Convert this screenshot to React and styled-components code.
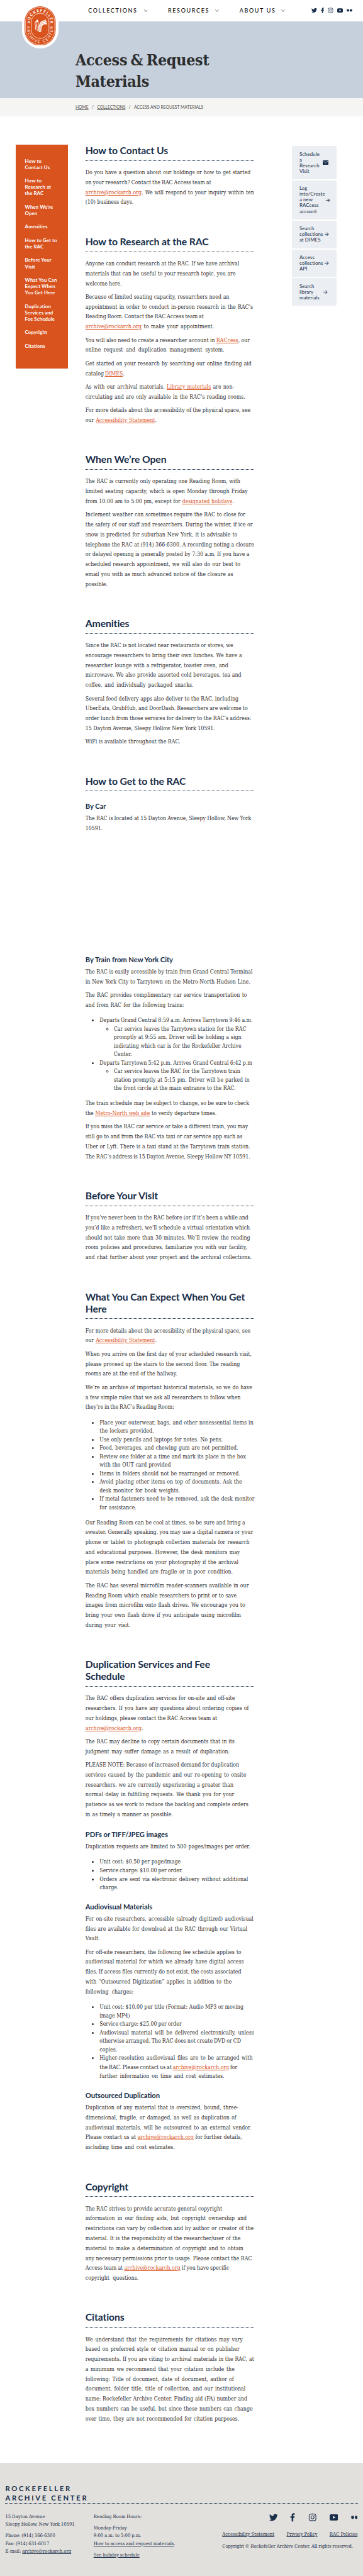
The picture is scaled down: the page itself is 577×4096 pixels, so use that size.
import React from 'react';
import styled, { createGlobalStyle, css } from 'styled-components';
import { FaTwitter, FaFacebookF, FaInstagram } from 'react-icons/fa';

/* One rem stands for 16 design pixels. */
const r = (n) => `${n / 16}rem`;

const color = {
  navy: '#192e49',
  orange: '#d9531e',
  ink: '#2e2e2e',
  sky: '#c5d0dc',
  mist: '#f5f5f3',
  card: '#ebeef2',
  stone: '#e2e0dd',
};

const sans = `Lato, "Open Sans", sans-serif`;
const serif = `"DejaVu Serif Condensed", "DejaVu Serif", serif`;

const GlobalStyle = createGlobalStyle`
  html { font-size: 9.0125px; }
  body { margin: 0; background: #fff; color: ${color.ink}; font-family: ${serif}; }
  * { box-sizing: border-box; }
  h1, h2, h3, p, ul { margin: 0; padding: 0; }
`;

const Page = styled.div`
  width: 100%;
  overflow: hidden;
`;

/* ---------- header ---------- */

const Header = styled.header`
  position: relative;
  height: ${r(60)};
  display: flex;
  align-items: center;
  padding-left: ${r(249)};
`;

const MenuItem = styled.a`
  display: flex;
  align-items: center;
  justify-content: space-between;
  flex: none;
  width: ${(p) => r(p.$width)};
  margin-right: ${(p) => r(p.$after)};
  padding-bottom: ${r(2)};
  font: 500 ${r(16)} / ${r(20)} ${sans};
  letter-spacing: ${r(2.9)};
  color: #111;
  white-space: nowrap;

  svg { width: ${r(10)}; height: ${r(7)}; margin-top: ${r(4)}; }
`;

const Chevron = () => (
  <svg viewBox="0 0 10 7" fill="none" stroke="#444" strokeWidth="1.5">
    <path d="M.7 .7 5 6 9.3 .7" />
  </svg>
);

const Social = styled.div`
  display: flex;
  align-items: center;
  justify-content: space-between;
  flex: none;
  width: ${(p) => r(p.$width)};
  height: ${(p) => r(p.$size)};
  color: ${color.navy};

  svg { display: block; flex: none; height: ${(p) => r(p.$size)}; width: ${(p) => r(p.$size)}; }
  svg.narrow { width: ${(p) => r(p.$size * 0.6)}; }
  svg.dots { width: ${(p) => r(p.$dots)}; }
`;

const YouTube = () => (
  <svg viewBox="0 0 24 24">
    <rect x="0" y="3" width="24" height="18" rx="4.5" fill="currentColor" />
    <path d="M9.500 8v8l7-4z" fill="#fff" />
  </svg>
);

const Flickr = () => (
  <svg className="dots" viewBox="0 0 16 8" fill="currentColor">
    <circle cx="3.7" cy="4" r="3.6" />
    <circle cx="12.3" cy="4" r="3.6" />
  </svg>
);

const SocialLinks = ({ width, size, dots }) => (
  <Social $width={width} $size={size} $dots={dots}>
    <FaTwitter />
    <FaFacebookF className="narrow" />
    <FaInstagram />
    <YouTube />
    <Flickr />
  </Social>
);

const Badge = styled.div`
  position: absolute;
  z-index: 1;
  top: 0;
  left: ${r(63)};
  width: ${r(102)};
  height: ${r(137)};
  padding-top: ${r(17)};
  background: #fff;
  border-radius: 0 0 ${r(51)} ${r(51)};

  svg { display: block; margin: 0 auto; width: ${r(88)}; height: ${r(111)}; }
`;

const Seal = () => (
  <svg viewBox="0 0 88 111">
    <rect width="88" height="111" rx="44" fill={color.orange} />
    <rect x="2.6" y="2.6" width="82.8" height="105.8" rx="41.4" fill="none" stroke="#fff" strokeWidth="1.1" />
    <rect x="19" y="19.5" width="50" height="71.5" rx="25" fill="none" stroke="#fff" strokeWidth="1.3" />
    <defs>
      <path id="arc-top" d="M15.5 49 V44 A28.5 28.5 0 0 1 72.5 44 V49" />
      <path id="arc-bottom" d="M7.6 54.5 V67 A36.4 36.4 0 0 0 80.4 67 V54.5" />
    </defs>
    <g fill="#fff" fontFamily="Lato, sans-serif" fontSize="11">
      <text fontWeight="900" fontSize="11"><textPath href="#arc-top" textLength="99" lengthAdjust="spacing">ROCKEFELLER</textPath></text>
      <text fontSize="11"><textPath href="#arc-bottom" startOffset="1" textLength="136" lengthAdjust="spacing">ARCHIVE CENTER</textPath></text>
    </g>
    <g fill="#fff">
      <path d="M28.5 46.5 36 37c2.500 3.500 3.800 8 4 14L43 70l-1.300 3-1.800-2.500-.700-19.500c-.600-3-1.600-5-3.200-6.500z" />
      <path d="M28.500 46.500l2.600 1 1 19.700-1.300-.8-1-14.500zM33 47l2.200 2 1.500 21-1.700-1zM37 49.500l1 2.500 1 20-1.200-1z" />
      <path d="M40.500 72c-1.500-14 .5-24.500 7-29.500 4-2.500 8-2 11.500-5l2-.2-2.300 4.700 4.800-.3-2.700 4 3 .3-2 6c-5-3-9-1-11.800 3-2.500 4-2.800 9-2.800 16l-3.200 1.800z" />
    </g>
    <g fill="none" stroke={color.orange} strokeWidth=".9">
      <path d="M42.500 71c-.8-13 1-21.500 6.500-25.500 4-2.500 8-1.500 12-4.300M44.500 71c-.4-12 1.200-18.500 6-22 4-2.300 8-1.200 12-3.200" />
      <path d="M31.500 47.500 34 68M36 48l2.500 22M53 43l5-5" />
    </g>
  </svg>
);

/* ---------- banner ---------- */

const Hero = styled.div`
  height: ${r(217)};
  padding: ${r(80)} 0 0 ${r(213)};
  background: ${color.sky};
`;

const Title = styled.h1`
  font: 700 ${r(44)} / ${r(60)} ${serif};
  letter-spacing: ${r(-0.42)};
  word-spacing: ${r(-4)};
  white-space: nowrap;
`;

const Crumbs = styled.nav`
  display: flex;
  align-items: center;
  height: ${r(52)};
  padding-left: ${r(213)};
  background: ${color.mist};
  font: 400 ${r(12)} / ${r(16)} ${sans};
  color: #555;
  white-space: nowrap;

  a { text-decoration: underline; }
  i { width: ${r(24)}; text-align: center; font-style: normal; }
`;

/* ---------- body columns ---------- */

const Columns = styled.div`
  display: flex;
  align-items: flex-start;
  height: ${r(6624)};
`;

const SideNav = styled.nav`
  flex: none;
  width: ${r(146)};
  height: ${r(632)};
  margin: ${r(80)} 0 0 ${r(45)};
  padding: ${r(36)} 0 0 ${r(25.3)};
  background: ${color.orange};
  color: #fff;
  font: 700 ${r(14)} / ${r(18)} ${sans};
  letter-spacing: ${r(0.15)};
  white-space: pre-line;

  a { display: block; margin-bottom: ${r(20)}; }
`;

const Article = styled.main`
  flex: none;
  width: ${r(477)};
  margin: ${r(79.4)} 0 0 ${r(50)};
`;

const Actions = styled.aside`
  flex: none;
  width: ${r(127)};
  margin: ${r(83.3)} 0 0 ${r(105)};
`;

const Action = styled.a`
  display: flex;
  align-items: center;
  justify-content: space-between;
  margin-bottom: ${r(3)};
  padding: ${r(15)} ${(p) => r(p.$right)} ${r(15.3)} ${r(22)};
  border-radius: ${r(3)};
  background: ${color.card};
  color: ${color.navy};
  font: 400 ${r(14)} / ${r(16)} ${sans};
  letter-spacing: ${r(0.13)};
  white-space: pre;

  svg { display: block; flex: none; width: ${(p) => r(p.$icon)}; }
`;

const Envelope = () => (
  <svg viewBox="0 0 16 13">
    <rect width="16" height="13" rx="1.5" fill={color.navy} />
    <path d="M1.800 2.300 8 6.800l6.200-4.500" fill="none" stroke={color.card} strokeWidth="1.300" />
  </svg>
);

const Arrow = () => (
  <svg viewBox="0 0 12 12" fill="none" stroke={color.navy} strokeWidth="1.700">
    <path d="M0 6h10.500M5.800 1l5 5-5 5" />
  </svg>
);

/* ---------- article text ---------- */

const H2 = styled.h2`
  margin-bottom: ${r(20.3)};
  padding-bottom: ${r(10.3)};
  border-bottom: 1px dotted ${color.navy};
  font: 700 ${r(28)} / ${r(33.6)} ${sans};
  letter-spacing: ${r(-0.2)};
  color: ${color.navy};
  white-space: pre-line;
`;

const H3 = styled.h3`
  margin: ${(p) => r(p.$top)} 0 ${r(10)};
  font: 700 ${r(20)} / ${r(24)} ${sans};
  letter-spacing: ${r(-0.1)};
  color: ${color.navy};
`;

const Section = styled.section`
  margin-bottom: ${r(79.2)};
`;

const textSize = css`
  font-size: ${r(15.6)};
  word-spacing: ${r(-1.3)};
`;

const Paragraph = styled.p`
  ${textSize}
  line-height: ${r(28)};
  & + & { margin-top: ${r(10)}; }
`;

/* A set line of type, its words spread to the line's measure. */
const Line = styled.span`
  display: block;
  width: ${(p) => r(p.$measure)};
  text-align: justify;
  text-align-last: justify;
  white-space: nowrap;
`;

const Link = styled.a`
  color: ${color.orange};
  text-decoration: underline;
  line-height: ${r(28)};
`;

const List = styled.ul`
  ${textSize}
  margin: ${(p) => (p.$nested ? 0 : r(16.8))} 0;
  padding-left: ${r(40)};
  list-style: ${(p) => (p.$nested ? 'circle' : 'disc')};
  line-height: ${r(24)};
`;

const Item = styled.li``;

const MapSpace = styled.div`
  height: ${r(312.5)};
`;

/* Square brackets in a line mark a link. */
const Lines = ({ of }) =>
  of.map(([measure, text], i) => (
    <Line key={i} $measure={measure}>
      {text.split(/[[\]]/).map((part, k) => (k % 2 ? <Link key={k}>{part}</Link> : part))}
    </Line>
  ));

const P = ({ of }) => <Paragraph><Lines of={of} /></Paragraph>;
const Li = ({ of, children }) => <Item><Lines of={of} />{children}</Item>;

/* ---------- footer ---------- */

const Footer = styled.footer`
  height: ${r(322)};
  padding: ${r(60)} ${r(15)} 0;
  background: ${color.stone};
  color: ${color.navy};
`;

const Wordmark = styled.div`
  border-bottom: 1px dotted ${color.navy};
  font: 700 ${r(20)} / ${r(26)} ${sans};
  letter-spacing: ${r(4.75)};
`;

const FooterRow = styled.div`
  display: flex;
  padding-top: ${r(27.5)};
  font-size: ${r(13.6)};
  word-spacing: ${r(-0.5)};
  line-height: ${r(22)};
  white-space: nowrap;

  a { text-decoration: underline; }
`;

const FooterColumn = styled.div`
  width: ${(p) => r(p.$width)};
  p + p { margin-top: ${r(10)}; }
`;

const Legal = styled.div`
  display: flex;
  flex-direction: column;
  align-items: flex-end;
  width: ${r(382)};
`;

const Policies = styled.div`
  display: flex;
  justify-content: space-between;
  width: 100%;
  margin: ${r(26)} 0 ${r(12)};
  font-size: ${r(13.8)};
`;

const Rights = styled.div`
  width: 100%;
  font-size: ${r(13.5)};
`;

const navItems = [
  'How to\nContact Us', 'How to\nResearch at\nthe RAC', 'When We’re\nOpen', 'Amenities',
  'How to Get to\nthe RAC', 'Before Your\nVisit', 'What You Can\nExpect When\nYou Get Here',
  'Duplication\nServices and\nFee Schedule', 'Copyright', 'Citations',
];

export default function App() {
  return (
    <Page>
      <GlobalStyle />
      <Header>
        <Badge><Seal /></Badge>
        <MenuItem $width={167} $after={58}>COLLECTIONS<Chevron /></MenuItem>
        <MenuItem $width={144} $after={58}>RESOURCES<Chevron /></MenuItem>
        <MenuItem $width={128} $after={74}>ABOUT US<Chevron /></MenuItem>
        <SocialLinks width={117} size={16} dots={16} />
      </Header>
      <Hero>
        <Title>Access &amp; Request<br />Materials</Title>
      </Hero>
      <Crumbs>
        <a>HOME</a><i>/</i><a>COLLECTIONS</a><i>/</i><span>ACCESS AND REQUEST MATERIALS</span>
      </Crumbs>

      <Columns>
        <SideNav>
          {navItems.map((item) => <a key={item}>{item}</a>)}
        </SideNav>

        <Article>
          <Section>
            <H2>How to Contact Us</H2>
            <P of={[
              [466, 'Do you have a question about our holdings or how to get started'],
              [355, 'on your research? Contact the RAC Access team at'],
              [476, '[archive@rockarch.org]. We will respond to your inquiry within ten'],
              [136, '(10) business days.'],
            ]} />
          </Section>

          <Section>
            <H2>How to Research at the RAC</H2>
            <P of={[
              [434, 'Anyone can conduct research at the RAC. If we have archival'],
              [424, 'materials that can be useful to your research topic, you are'],
              [103, 'welcome here.'],
            ]} />
            <P of={[
              [406, 'Because of limited seating capacity, researchers need an'],
              [473, 'appointment in order to conduct in-person research in the RAC’s'],
              [334, 'Reading Room. Contact the RAC Access team at'],
              [363, '[archive@rockarch.org] to make your appointment.'],
            ]} />
            <P of={[
              [464, 'You will also need to create a researcher account in [RACcess], our'],
              [392, 'online request and duplication management system.'],
            ]} />
            <P of={[
              [469, 'Get started on your research by searching our online finding aid'],
              [107.5, 'catalog [DIMES].'],
            ]} />
            <P of={[
              [420, 'As with our archival materials, [Library materials] are non-'],
              [451, 'circulating and are only available in the RAC’s reading rooms.'],
            ]} />
            <P of={[
              [466, 'For more details about the accessibility of the physical space, see'],
              [201, 'our [Accessibility Statement].'],
            ]} />
          </Section>

          <Section>
            <H2>When We’re Open</H2>
            <P of={[
              [437, 'The RAC is currently only operating one Reading Room, with'],
              [458, 'limited seating capacity, which is open Monday through Friday'],
              [419, 'from 10:00 am to 5:00 pm, except for [designated holidays].'],
            ]} />
            <P of={[
              [451, 'Inclement weather can sometimes require the RAC to close for'],
              [472, 'the safety of our staff and researchers. During the winter, if ice or'],
              [429, 'snow is predicted for suburban New York, it is advisable to'],
              [476, 'telephone the RAC at (914) 366-6300. A recording noting a closure'],
              [463, 'or delayed opening is generally posted by 7:30 a.m. If you have a'],
              [437, 'scheduled research appointment, we will also do our best to'],
              [417, 'email you with as much advanced notice of the closure as'],
              [64, 'possible.'],
            ]} />
          </Section>

          <Section>
            <H2>Amenities</H2>
            <P of={[
              [417, 'Since the RAC is not located near restaurants or stores, we'],
              [442, 'encourage researchers to bring their own lunches. We have a'],
              [403, 'researcher lounge with a refrigerator, toaster oven, and'],
              [440, 'microwave. We also provide assorted cold beverages, tea and'],
              [305, 'coffee, and individually packaged snacks.'],
            ]} />
            <P of={[
              [432, 'Several food delivery apps also deliver to the RAC, including'],
              [458, 'UberEats, GrubHub, and DoorDash. Researchers are welcome to'],
              [468, 'order lunch from those services for delivery to the RAC’s address:'],
              [366, '15 Dayton Avenue, Sleepy Hollow New York 10591.'],
            ]} />
            <P of={[[268, 'WiFi is available throughout the RAC.']]} />
          </Section>

          <Section>
            <H2>How to Get to the RAC</H2>
            <H3 $top={30}>By Car</H3>
            <P of={[
              [468, 'The RAC is located at 15 Dayton Avenue, Sleepy Hollow, New York'],
              [48, '10591.'],
            ]} />
            <MapSpace />
            <H3 $top={30}>By Train from New York City</H3>
            <P of={[
              [472, 'The RAC is easily accessible by train from Grand Central Terminal'],
              [465, 'in New York City to Tarrytown on the Metro-North Hudson Line.'],
            ]} />
            <P of={[
              [456, 'The RAC provides complimentary car service transportation to'],
              [278, 'and from RAC for the following trains:'],
            ]} />
            <List>
              <Li of={[[432, 'Departs Grand Central 8:59 a.m. Arrives Tarrytown 9:46 a.m.']]}>
                <List $nested>
                  <Li of={[
                    [374, 'Car service leaves the Tarrytown station for the RAC'],
                    [360, 'promptly at 9:55 am. Driver will be holding a sign'],
                    [360, 'indicating which car is for the Rockefeller Archive'],
                    [51, 'Center.'],
                  ]} />
                </List>
              </Li>
              <Li of={[[430.5, 'Departs Tarrytown 5:42 p.m. Arrives Grand Central 6:42 p.m']]}>
                <List $nested>
                  <Li of={[
                    [357, 'Car service leaves the RAC for the Tarrytown train'],
                    [383, 'station promptly at 5:15 pm. Driver will be parked in'],
                    [344, 'the front circle at the main entrance to the RAC.'],
                  ]} />
                </List>
              </Li>
            </List>
            <P of={[
              [462, 'The train schedule may be subject to change, so be sure to check'],
              [370, 'the [Metro-North web site] to verify departure times.'],
            ]} />
            <P of={[
              [459, 'If you miss the RAC car service or take a different train, you may'],
              [443, 'still go to and from the RAC via taxi or car service app such as'],
              [465, 'Uber or Lyft. There is a taxi stand at the Tarrytown train station.'],
              [465, 'The RAC’s address is 15 Dayton Avenue, Sleepy Hollow NY 10591.'],
            ]} />
          </Section>

          <Section>
            <H2>Before Your Visit</H2>
            <P of={[
              [460, 'If you’ve never been to the RAC before (or if it’s been a while and'],
              [464, 'you’d like a refresher), we’ll schedule a virtual orientation which'],
              [465, 'should not take more than 30 minutes. We’ll review the reading'],
              [456, 'room policies and procedures, familiarize you with our facility,'],
              [469, 'and chat further about your project and the archival collections.'],
            ]} />
          </Section>

          <Section>
            <H2>{'What You Can Expect When You Get\nHere'}</H2>
            <P of={[
              [466, 'For more details about the accessibility of the physical space, see'],
              [201, 'our [Accessibility Statement].'],
            ]} />
            <P of={[
              [469, 'When you arrive on the first day of your scheduled research visit,'],
              [436, 'please proceed up the stairs to the second floor. The reading'],
              [259, 'rooms are at the end of the hallway.'],
            ]} />
            <P of={[
              [471, 'We’re an archive of important historical materials, so we do have'],
              [438, 'a few simple rules that we ask all researchers to follow when'],
              [250, 'they’re in the RAC’s Reading Room:'],
            ]} />
            <List>
              <Li of={[
                [434, 'Place your outerwear, bags, and other nonessential items in'],
                [153, 'the lockers provided.'],
              ]} />
              <Li of={[[348, 'Use only pencils and laptops for notes. No pens.']]} />
              <Li of={[[391, 'Food, beverages, and chewing gum are not permitted.']]} />
              <Li of={[
                [413, 'Review one folder at a time and mark its place in the box'],
                [201, 'with the OUT card provided'],
              ]} />
              <Li of={[[397, 'Items in folders should not be rearranged or removed.']]} />
              <Li of={[
                [402, 'Avoid placing other items on top of documents. Ask the'],
                [227, 'desk monitor for book weights.'],
              ]} />
              <Li of={[
                [437, 'If metal fasteners need to be removed, ask the desk monitor'],
                [104, 'for assistance.'],
              ]} />
            </List>
            <P of={[
              [451, 'Our Reading Room can be cool at times, so be sure and bring a'],
              [473, 'sweater. Generally speaking, you may use a digital camera or your'],
              [463, 'phone or tablet to photograph collection materials for research'],
              [436, 'and educational purposes. However, the desk monitors may'],
              [432, 'place some restrictions on your photography if the archival'],
              [416, 'materials being handled are fragile or in poor condition.'],
            ]} />
            <P of={[
              [461, 'The RAC has several microfilm reader-scanners available in our'],
              [427, 'Reading Room which enable researchers to print or to save'],
              [451, 'images from microfilm onto flash drives. We encourage you to'],
              [439, 'bring your own flash drive if you anticipate using microfilm'],
              [127, 'during your visit.'],
            ]} />
          </Section>

          <Section>
            <H2>{'Duplication Services and Fee\nSchedule'}</H2>
            <P of={[
              [422, 'The RAC offers duplication services for on-site and off-site'],
              [461, 'researchers. If you have any questions about ordering copies of'],
              [372, 'our holdings, please contact the RAC Access team at'],
              [162, '[archive@rockarch.org].'],
            ]} />
            <P of={[
              [421, 'The RAC may decline to copy certain documents that in its'],
              [407, 'judgment may suffer damage as a result of duplication.'],
            ]} />
            <P of={[
              [434, 'PLEASE NOTE: Because of increased demand for duplication'],
              [454, 'services caused by the pandemic and our re-opening to onsite'],
              [418, 'researchers, we are currently experiencing a greater than'],
              [420, 'normal delay in fulfilling requests. We thank you for your'],
              [460, 'patience as we work to reduce the backlog and complete orders'],
              [247, 'in as timely a manner as possible.'],
            ]} />
            <H3 $top={29}>PDFs or TIFF/JPEG images</H3>
            <P of={[[465, 'Duplication requests are limited to 500 pages/images per order.']]} />
            <List>
              <Li of={[[229, 'Unit cost: $0.50 per page/image']]} />
              <Li of={[[233, 'Service charge: $10.00 per order.']]} />
              <Li of={[
                [419, 'Orders are sent via electronic delivery without additional'],
                [53, 'charge.'],
              ]} />
            </List>
            <H3 $top={28.6}>Audiovisual Materials</H3>
            <P of={[
              [474, 'For on-site researchers, accessible (already digitized) audiovisual'],
              [457, 'files are available for download at the RAC through our Virtual'],
              [42, 'Vault.'],
            ]} />
            <P of={[
              [440, 'For off-site researchers, the following fee schedule applies to'],
              [447, 'audiovisual material for which we already have digital access'],
              [440, 'files. If access files currently do not exist, the costs associated'],
              [413, 'with “Outsourced Digitization” applies in addition to the'],
              [135.5, 'following charges:'],
            ]} />
            <List>
              <Li of={[
                [406, 'Unit cost: $10.00 per title (Format: Audio MP3 or moving'],
                [86, 'image MP4)'],
              ]} />
              <Li of={[[230, 'Service charge: $25.00 per order']]} />
              <Li of={[
                [436, 'Audiovisual material will be delivered electronically, unless'],
                [399, 'otherwise arranged. The RAC does not create DVD or CD'],
                [49, 'copies.'],
              ]} />
              <Li of={[
                [432, 'Higher-resolution audiovisual files are to be arranged with'],
                [389, 'the RAC. Please contact us at [archive@rockarch.org] for'],
                [352, 'further information on time and cost estimates.'],
              ]} />
            </List>
            <H3 $top={28.6}>Outsourced Duplication</H3>
            <P of={[
              [432, 'Duplication of any material that is oversized, bound, three-'],
              [426, 'dimensional, fragile, or damaged, as well as duplication of'],
              [468, 'audiovisual materials, will be outsourced to an external vendor.'],
              [442, 'Please contact us at [archive@rockarch.org] for further details,'],
              [252, 'including time and cost estimates.'],
            ]} />
          </Section>

          <Section>
            <H2>Copyright</H2>
            <P of={[
              [386, 'The RAC strives to provide accurate general copyright'],
              [455, 'information in our finding aids, but copyright ownership and'],
              [475, 'restrictions can vary by collection and by author or creator of the'],
              [438, 'material. It is the responsibility of the researcher/user of the'],
              [446, 'material to make a determination of copyright and to obtain'],
              [470, 'any necessary permissions prior to usage. Please contact the RAC'],
              [406, 'Access team at [archive@rockarch.org] if you have specific'],
              [150, 'copyright questions.'],
            ]} />
          </Section>

          <Section>
            <H2>Citations</H2>
            <P of={[
              [444, 'We understand that the requirements for citations may vary'],
              [435, 'based on preferred style or citation manual or on publisher'],
              [476, 'requirements. If you are citing to archival materials in the RAC, at'],
              [421, 'a minimum we recommend that your citation include the'],
              [419, 'following: Title of document, date of document, author of'],
              [452, 'document, folder title, title of collection, and our institutional'],
              [457, 'name: Rockefeller Archive Center. Finding aid (FA) number and'],
              [472, 'box numbers can be useful, but since these numbers can change'],
              [434, 'over time, they are not recommended for citation purposes.'],
            ]} />
          </Section>
        </Article>

        <Actions>
          <Action $right={23} $icon={16}>{'Schedule\na\nResearch\nVisit'}<Envelope /></Action>
          <Action $right={18} $icon={12}>{'Log\ninto/Create\na new\nRACcess\naccount'}<Arrow /></Action>
          <Action $right={22} $icon={12}>{'Search\ncollections\nat DIMES'}<Arrow /></Action>
          <Action $right={22} $icon={12}>{'Access\ncollections\nAPI'}<Arrow /></Action>
          <Action $right={25} $icon={12}>{'Search\nlibrary\nmaterials'}<Arrow /></Action>
        </Actions>
      </Columns>

      <Footer>
        <Wordmark>ROCKEFELLER<br />ARCHIVE CENTER</Wordmark>
        <FooterRow>
          <FooterColumn $width={249}>
            <p>15 Dayton Avenue<br />Sleepy Hollow, New York 10591</p>
            <p>Phone: (914) 366-6300<br />Fax: (914) 631-6017<br />E-mail: <a>archive@rockarch.org</a></p>
          </FooterColumn>
          <FooterColumn $width={363}>
            <p>Reading Room Hours:</p>
            <p>Monday-Friday<br />9:00 a.m. to 5:00 p.m.<br /><a>How to access and request materials</a>.</p>
            <p><a>See holiday schedule</a></p>
          </FooterColumn>
          <Legal>
            <SocialLinks width={250} size={24} dots={19} />
            <Policies><a>Accessibility Statement</a><a>Privacy Policy</a><a>RAC Policies</a></Policies>
            <Rights>Copyright © Rockefeller Archive Center. All rights reserved.</Rights>
          </Legal>
        </FooterRow>
      </Footer>
    </Page>
  );
}
